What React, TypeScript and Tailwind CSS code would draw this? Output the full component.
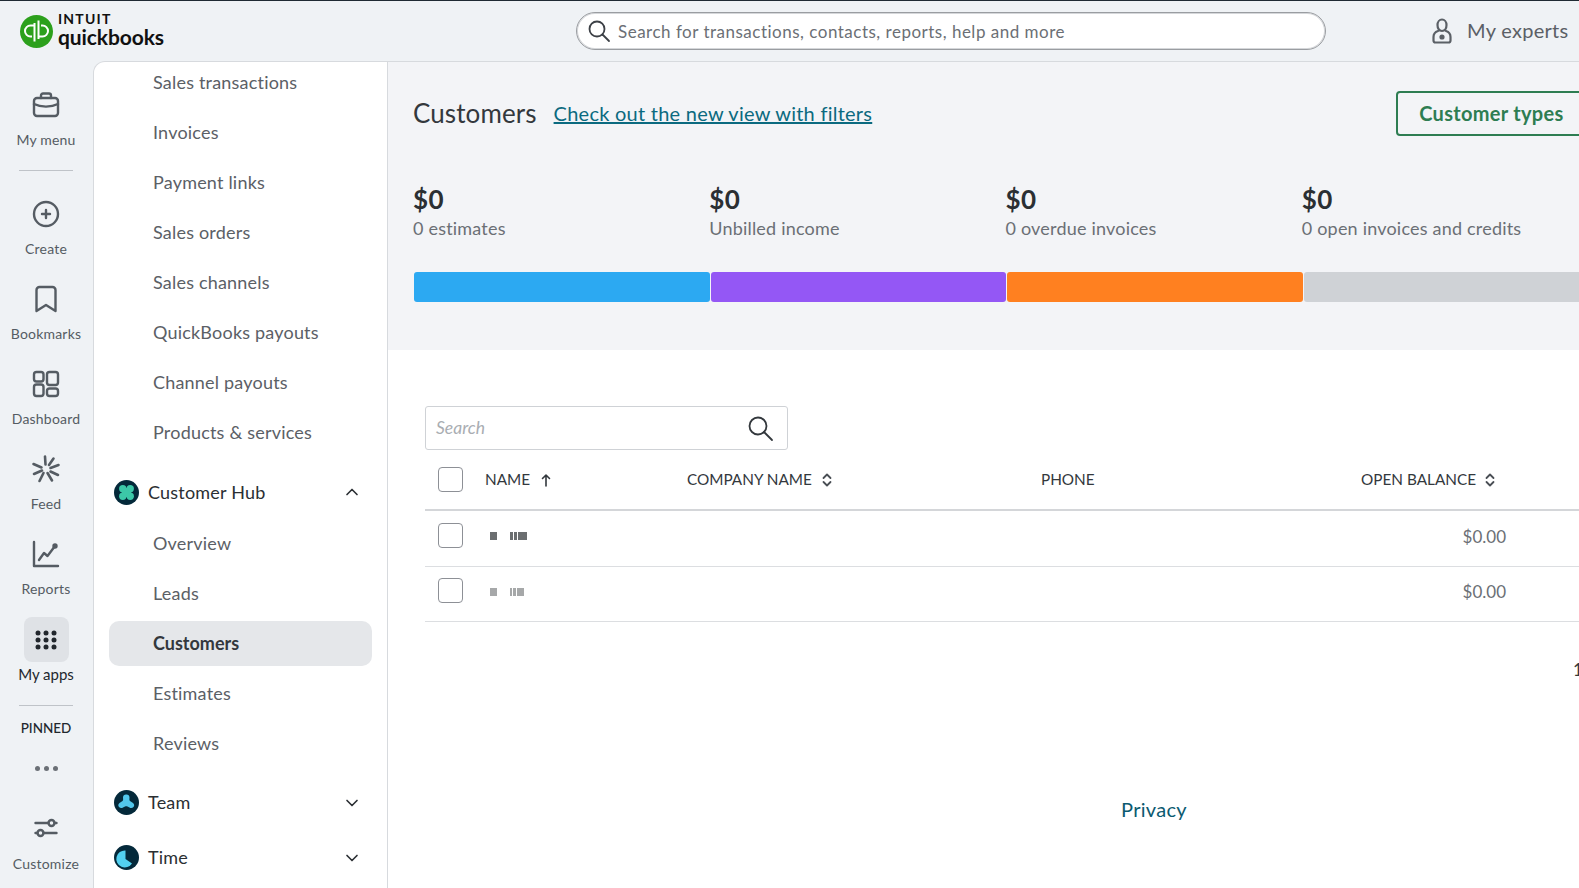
import { ChevronDown, ChevronUp } from "lucide-react";
import type { ReactNode } from "react";

const font = "font-['Lato','Noto_Sans',sans-serif]";

const Ic = ({ children, size = 30, sw = 2.4 }: { children: ReactNode; size?: number; sw?: number }) => (
  <svg width={size} height={size} viewBox="0 0 30 30" fill="none" stroke="currentColor" strokeWidth={sw} strokeLinecap="round" strokeLinejoin="round">
    {children}
  </svg>
);

const railItems = [
  { label: "My menu", icon: <Ic><rect x="3" y="8" width="24" height="18" rx="3" /><path d="M10 8V5.500A2 2 0 0 1 12 3.500h6a2 2 0 0 1 2 2V8M3 14c7 3.500 17 3.500 24 0" /></Ic> },
];

const railMiddle = [
  { label: "Create", icon: <Ic><circle cx="15" cy="15" r="12" /><path d="M15 11v8M11 15h8" /></Ic> },
  { label: "Bookmarks", icon: <Ic><path d="M5.500 6a3 3 0 0 1 3-3h13a3 3 0 0 1 3 3v21l-9.500-6-9.500 6z" /></Ic> },
  { label: "Dashboard", icon: <Ic><rect x="3" y="3" width="9.500" height="9.500" rx="2.500" /><rect x="16" y="3" width="11" height="13" rx="2.500" /><rect x="3" y="15.500" width="9.500" height="11.500" rx="2.500" /><rect x="16" y="19.500" width="11" height="7.500" rx="2.500" /></Ic> },
  { label: "Feed", icon: <Ic sw={2.6}><path d="M14 2.500l.5 8M22.500 4.500L18 11M27.500 11l-8 3M2.500 10l8 3.500M3 20l8-3.500M8.500 27l4-8M21 26.500l-4.500-7.500M27 21l-7.500-3.500" /></Ic> },
  { label: "Reports", icon: <Ic><path d="M3 3v24h24M8 21l5-7 3.500 3L24 7" /><circle cx="24" cy="7" r="1.500" fill="currentColor" /></Ic> },
];

const salesLinks = ["Sales transactions", "Invoices", "Payment links", "Sales orders", "Sales channels", "QuickBooks payouts", "Channel payouts", "Products & services"];
const hubLinks = ["Overview", "Leads", "Customers", "Estimates", "Reviews"];

const stats = [
  { label: "0 estimates", bar: "bg-[#2ca9f2]" },
  { label: "Unbilled income", bar: "bg-[#9457f5]" },
  { label: "0 overdue invoices", bar: "bg-[#ff8020]" },
  { label: "0 open invoices and credits", bar: "bg-[#cfd2d6]" },
];

function RailItem({ label, icon }: { label: string; icon: ReactNode }) {
  return (
    <div className="flex h-[85px] flex-col items-center pt-[5px] text-[#555c63]">
      {icon}
      <span className="mt-[11px] text-[14px] leading-[18px] tracking-[0.2px] whitespace-nowrap">{label}</span>
    </div>
  );
}

function SortIcon() {
  return (
    <svg width="10" height="16" viewBox="0 0 10 16" fill="none" stroke="#4a4f55" strokeWidth="1.800" strokeLinecap="round" strokeLinejoin="round">
      <path d="M1.500 6L5 2.500 8.500 6M1.500 10L5 13.500 8.500 10" />
    </svg>
  );
}

function Checkbox() {
  return <div className="size-[25px] shrink-0 rounded-[4px] border border-[#8d9096] bg-white" />;
}

function HubHeading({ label, open, icon }: { label: string; open?: boolean; icon: ReactNode }) {
  return (
    <div className="flex h-[55px] items-center pr-[25px] pl-[20px] text-[#2b2f33]">
      {icon}
      <span className="ml-[9px] flex-1 text-[18px] tracking-[0.2px]">{label}</span>
      {open ? <ChevronUp size={20} strokeWidth={2} /> : <ChevronDown size={20} strokeWidth={2} />}
    </div>
  );
}

function Row({ smudge, tone }: { smudge: number[]; tone: string }) {
  return (
    <div className="flex h-[55.500px] items-center border-b border-[#dcdee1] pb-[4px] pl-[13px]">
      <div className="-mt-[2px]">
        <Checkbox />
      </div>
      <div className="ml-[22px] flex w-[202px] items-center gap-[1px] pl-[5px]">
        {smudge.map((w, i) => (
          <span key={i} className={`h-[8px] blur-[0.5px] ${tone}`} style={{ width: w, marginRight: i === 0 ? 12 : 0 }} />
        ))}
      </div>
      <div className="w-[613px]" />
      <div className="w-[206px] text-right text-[17px] text-[#6b6f75]">$0.00</div>
    </div>
  );
}

export default function App() {
  return (
    <div className={`${font} flex h-screen w-full flex-col overflow-hidden border-t border-[#1f2a33] bg-[#eff2f5]`}>
      {/* Top bar */}
      <header className="flex h-[60px] shrink-0 items-center">
        <div className="flex w-[576px] shrink-0 items-center pl-[20px]">
          <svg width="33" height="33" viewBox="0 0 33 33">
            <circle cx="16.500" cy="16.500" r="16.500" fill="#2ca01c" />
            <path d="M14.500 11h-4a5.500 5.500 0 0 0 0 11h1.500M14.500 8.500V27M18.500 22h4a5.500 5.500 0 0 0 0-11H21M18.500 24.500V6" fill="none" stroke="#fff" strokeWidth="2" transform="translate(0 -0.500)" />
          </svg>
          <div className="ml-[5px] flex flex-col text-[#111]">
            <span className="text-[14px] leading-[12px] font-bold tracking-[1.2px]">INTUIT</span>
            <span className="text-[21px] leading-[24px] font-bold tracking-[-0.1px]">quickbooks</span>
          </div>
        </div>
        <div className="flex h-[38px] w-[750px] shrink-0 items-center rounded-full border border-[#9a9da1] bg-white pl-[10px] shadow-[inset_0_0_0_1px_#d5d7da]">
          <svg width="24" height="24" viewBox="0 0 24 24" fill="none" stroke="#3c4046" strokeWidth="1.800" strokeLinecap="round">
            <circle cx="10" cy="10" r="7.500" />
            <path d="M15.500 15.500L22 22" />
          </svg>
          <span className="mt-[2px] ml-[7px] text-[17px] tracking-[0.5px] text-[#6b6f75]">Search for transactions, contacts, reports, help and more</span>
        </div>
        <div className="ml-[106px] flex items-center text-[#5b6066]">
          <svg width="20" height="26" viewBox="0 0 20 26" fill="none" stroke="currentColor" strokeWidth="2.200" strokeLinecap="round" strokeLinejoin="round">
            <path d="M5.500 7a4.500 5.500 0 0 1 9 0c0 3-1.500 6-4.500 6S5.500 10 5.500 7zM6 13c-3 1-4.500 3-4.500 6v3.500a2 2 0 0 0 2 2h13a2 2 0 0 0 2-2V19c0-3-1.500-5-4.500-6" />
            <circle cx="10" cy="19" r="1.500" fill="currentColor" />
          </svg>
          <span className="mb-[2px] ml-[15px] text-[20px] tracking-[0.3px] whitespace-nowrap">My experts</span>
        </div>
      </header>

      <div className="flex min-h-0 flex-1">
        {/* Icon rail */}
        <nav className="flex w-[93px] shrink-0 flex-col items-stretch pt-[24px] pr-[1px]">
          {railItems.map((r) => <RailItem key={r.label} {...r} />)}
          <div className="mx-[19px] mb-[23px] h-px bg-[#bfc3c8]" />
          {railMiddle.map((r) => <RailItem key={r.label} {...r} />)}
          <div className="-mt-[2px] flex flex-col items-center">
            <div className="flex size-[45px] items-center justify-center rounded-[8px] bg-[#dfe2e6] text-[#22272d]">
              <svg width="22" height="20" viewBox="0 0 22 20" fill="currentColor">
                {[3, 11, 19].map((x) => [3, 10, 17].map((y) => <circle key={`${x}-${y}`} cx={x} cy={y} r="2.500" />))}
              </svg>
            </div>
            <span className="mt-[3px] text-[15px] leading-[18px] text-[#22272d]">My apps</span>
          </div>
          <div className="mx-[19px] mt-[22px] h-px bg-[#bfc3c8]" />
          <div className="mt-[13px] text-center text-[13.500px] leading-[18px] font-medium text-[#22272d]">PINNED</div>
          <div className="mt-[29px] flex justify-center gap-[4px]">
            {[0, 1, 2].map((d) => <span key={d} className="size-[5px] rounded-full bg-[#6b7076]" />)}
          </div>
          <div className="mt-[46px] flex justify-center text-[#555c63]">
            <svg width="24" height="22" viewBox="0 0 24 22" fill="none" stroke="currentColor" strokeWidth="2.400" strokeLinecap="round">
              <path d="M1.500 6h13M20.500 6h2M1.500 16h2M9.500 16h13" />
              <circle cx="17.500" cy="6" r="3" />
              <circle cx="6.500" cy="16" r="3" />
            </svg>
          </div>
          <div className="mt-[16px] text-center text-[14px] leading-[18px] tracking-[0.2px] text-[#555c63]">Customize</div>
        </nav>

        {/* Second-level menu */}
        <aside className="w-[295px] shrink-0 overflow-hidden rounded-tl-[12px] border-t border-r border-l border-[#d7dade] bg-white">
          <div className="-mt-[5px] pl-[59px]">
            {salesLinks.map((l) => (
              <div key={l} className="flex h-[50px] items-center text-[18px] tracking-[0.2px] text-[#5b6066]">{l}</div>
            ))}
          </div>
          <div className="mt-[7.500px]">
            <HubHeading label="Customer Hub" open icon={
              <svg width="25" height="25" viewBox="0 0 25 25">
                <circle cx="12.500" cy="12.500" r="12.500" fill="#04293a" />
                <g fill="#3cc8a8">
                  <circle cx="8.800" cy="8.800" r="3.700" />
                  <circle cx="16.200" cy="8.800" r="3.700" />
                  <circle cx="8.800" cy="16.200" r="3.700" />
                  <circle cx="16.200" cy="16.200" r="3.700" />
                  <rect x="8" y="8" width="9" height="9" />
                </g>
              </svg>
            } />
            <div className="-mt-[1px] mb-[6.500px] flex flex-col px-[15px]">
              {hubLinks.map((l) => (
                <div key={l} className="flex h-[50px] items-center">
                  <div className={`flex h-[45px] flex-1 items-center rounded-[10px] pl-[44px] text-[18px] ${l === "Customers" ? "bg-[#e5e7ea] font-bold tracking-[0px] text-[#33383d]" : "tracking-[0.2px] text-[#5b6066]"}`}>{l}</div>
                </div>
              ))}
            </div>
            <HubHeading label="Team" icon={
              <svg width="25" height="25" viewBox="0 0 25 25">
                <circle cx="12.500" cy="12.500" r="12.500" fill="#04293a" />
                <path d="M12.500 4.500c1.800 0 3 1.200 3 3 0 1.500-.5 2.500.5 3.500l3 2c1.500 1 1.500 3 .5 4s-2.500 1.500-4 .5l-2-1c-1-.5-1.500-.5-2.500 0l-2 1c-1.500 1-3 .5-4-.5s-1-3 .5-4l3-2c1-1 .5-2 .5-3.500 0-1.800 1.200-3 3-3z" fill="#52c7ec" />
              </svg>
            } />
            <HubHeading label="Time" icon={
              <svg width="25" height="25" viewBox="0 0 25 25">
                <circle cx="12.500" cy="12.500" r="12.500" fill="#04293a" />
                <path d="M11.500 5.500v8.500l6.500 4.500a8.500 8.500 0 1 1-6.500-13z" fill="#52d0f0" />
              </svg>
            } />
          </div>
        </aside>

        {/* Main content */}
        <main className="min-w-0 flex-1 overflow-hidden border-t border-[#d7dade] bg-white">
          <div className="w-[1532px]">
            <section className="h-[288px] bg-[#f3f4f7] pt-[29px] pl-[25px]">
              <div className="flex h-[45px] items-center">
                <h1 className="text-[26px] tracking-[0.1px] text-[#33383d]">Customers</h1>
                <a className="mb-[2px] ml-[17px] text-[20px] tracking-[0.25px] text-[#0b6a80] underline">Check out the new view with filters</a>
                <button className="ml-[524px] flex h-[45px] w-[200px] items-center rounded-[4px] border-2 border-[#2e7d52] pb-[2px] pl-[21px] text-[20px] font-bold tracking-[0.3px] text-[#2e7d52]">Customer types</button>
              </div>
              <div className="mt-[48px] grid w-[1185px] grid-cols-4">
                {stats.map((s) => (
                  <div key={s.label}>
                    <div className="text-[26px] leading-[30px] font-bold tracking-[0.5px] text-[#2b2f33]">$0</div>
                    <div className="mt-[2px] text-[18px] leading-[24px] tracking-[0.2px] text-[#6b6f75]">{s.label}</div>
                  </div>
                ))}
              </div>
              <div className="mt-[32px] ml-[1px] grid w-[1185px] grid-cols-4 gap-[1px]">
                {stats.map((s) => <div key={s.bar} className={`h-[30px] rounded-[3px] ${s.bar}`} />)}
              </div>
            </section>

            <section className="pt-[56px] pl-[37px]">
              <div className="flex h-[44px] w-[363px] items-center justify-between rounded-[3px] border border-[#cfd2d6] pr-[13px] pl-[10px]">
                <span className="text-[17.500px] text-[#a9adb2] italic">Search</span>
                <svg width="28" height="28" viewBox="0 0 28 28" fill="none" stroke="#33383d" strokeWidth="1.800" strokeLinecap="round">
                  <circle cx="12" cy="12" r="8.500" />
                  <path d="M18 18l8 8" />
                </svg>
              </div>
              <div className="w-[1450px]">
                <div className="flex h-[61px] items-center border-b-2 border-[#d4d6d9] pl-[13px] text-[15.300px] text-[#33383d]">
                  <Checkbox />
                  <div className="ml-[22px] flex w-[202px] items-center">
                    NAME
                    <svg className="ml-[11px]" width="10" height="14" viewBox="0 0 10 14" fill="none" stroke="#33383d" strokeWidth="1.600" strokeLinecap="round" strokeLinejoin="round">
                      <path d="M5 13V2M1.500 5.500L5 2l3.500 3.500" />
                    </svg>
                  </div>
                  <div className="flex w-[354px] items-center gap-[10px]">COMPANY NAME <SortIcon /></div>
                  <div className="w-[259px]">PHONE</div>
                  <div className="flex w-[206px] items-center justify-end gap-[9px] pr-[11px] whitespace-nowrap">OPEN BALANCE <SortIcon /></div>
                </div>
                <Row smudge={[7, 3, 3, 9]} tone="bg-[#3a3d40]/75" />
                <Row smudge={[7, 2, 3, 7]} tone="bg-[#3a3d40]/45" />
              </div>
              <div className="mt-[36px] pl-[1148px] text-[17px] leading-[24px] text-[#33383d]">1</div>
            </section>

            <footer className="mt-[113px] text-center text-[20px] leading-[28px] tracking-[0.3px] text-[#0b5a70]">Privacy</footer>
          </div>
        </main>
      </div>
    </div>
  );
}
